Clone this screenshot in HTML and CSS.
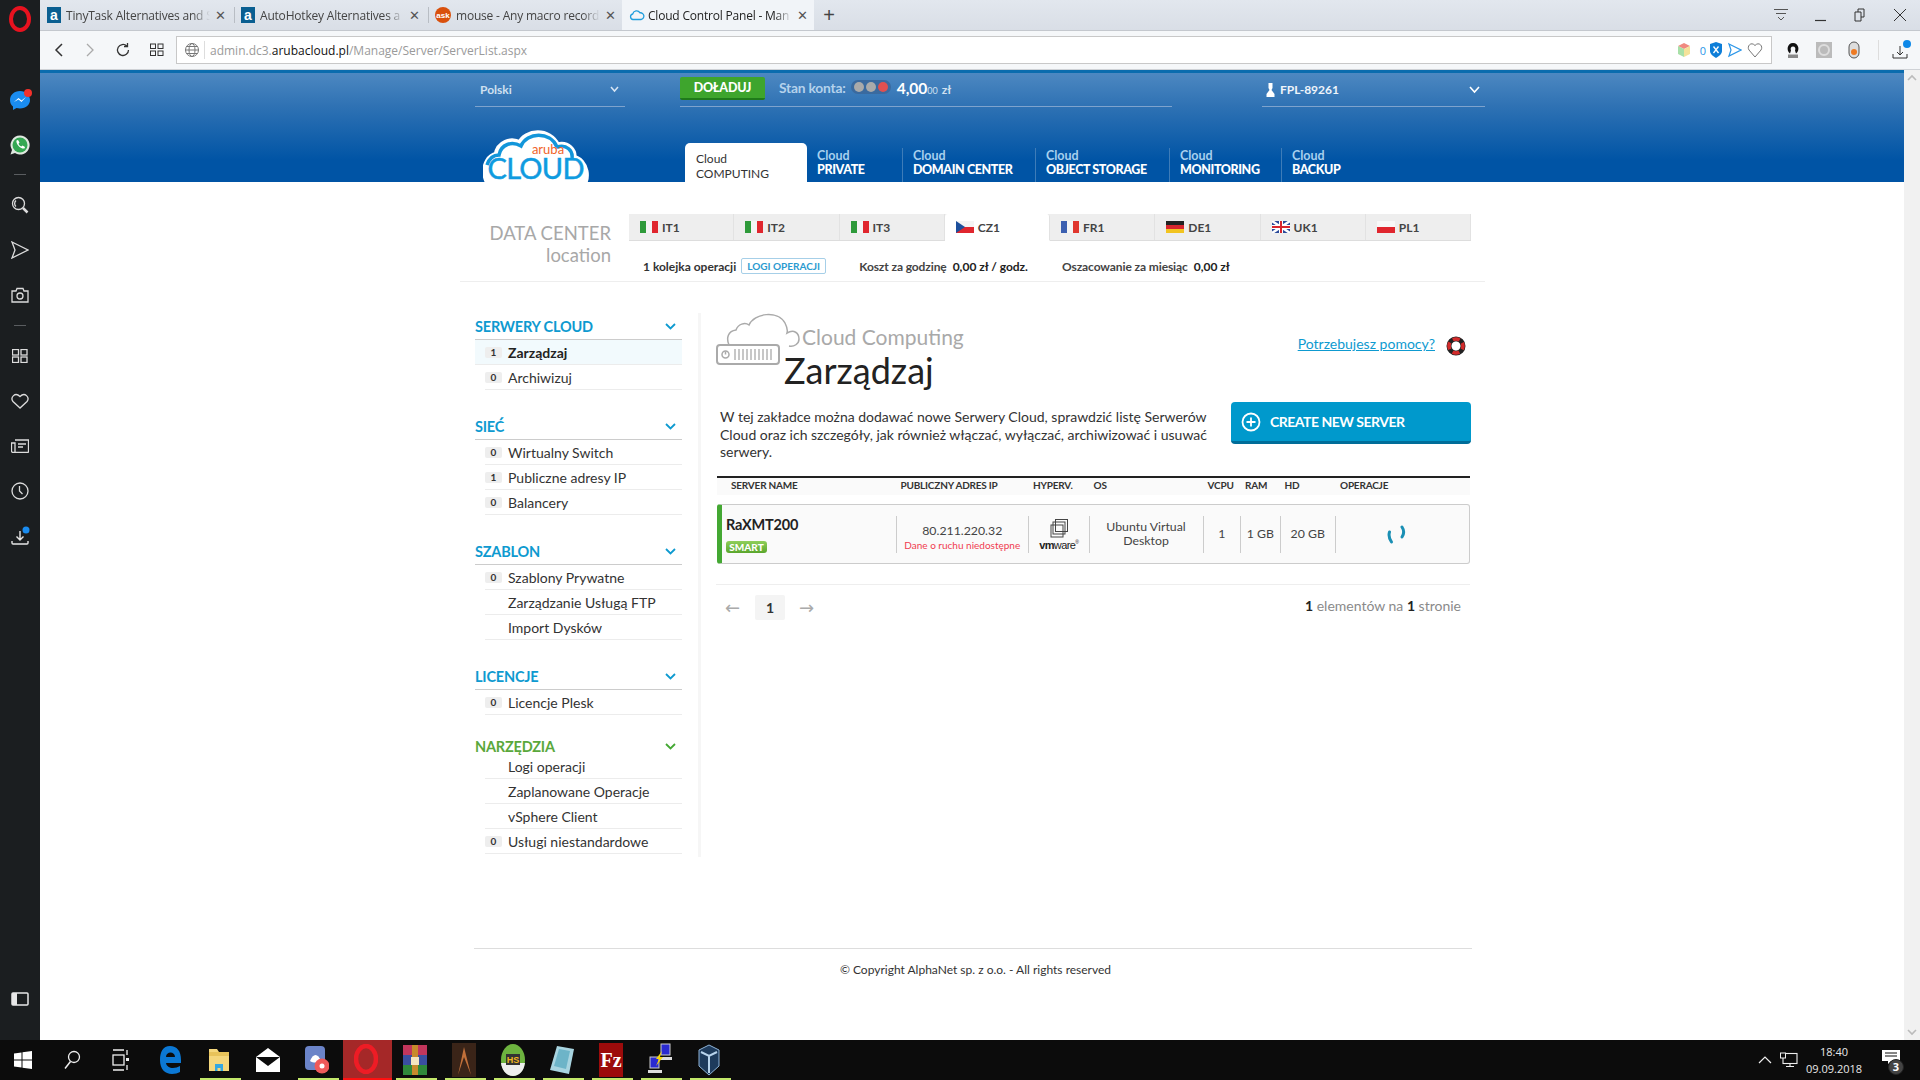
FILE: index.html
```html
<!DOCTYPE html>
<html lang="pl">
<head>
<meta charset="utf-8">
<title>Cloud Control Panel</title>
<link rel="stylesheet" href="styles.css">
</head>
<body>
<div class="app">
  <aside class="rail">
    <div class="rail-logo"><svg width="22" height="26" viewBox="0 0 22 26"><ellipse cx="11" cy="13" rx="9" ry="11" fill="none" stroke="#e8121f" stroke-width="4"/></svg></div>
    <div class="rail-item"><svg width="24" height="24" viewBox="0 0 24 24"><path d="M12 3C6 3 2 7 2 12c0 3 1 5 3 6.500V22l3.500-2c1 .3 2.300.5 3.500.5 6 0 10-4 10-8.500S18 3 12 3z" fill="#1a8cf0"/><path d="M6 14l4.500-4 3 2.500L18 9l-4.500 5-3-2.500z" fill="#fff"/><circle cx="20" cy="5" r="4" fill="#f4312b"/></svg></div>
    <div class="rail-item"><svg width="22" height="22" viewBox="0 0 22 22"><path d="M11 1.500a9.500 9.500 0 0 0-8 14.500L1.500 20.500 6 19a9.500 9.500 0 1 0 5-17.500z" fill="#dfe8df"/><circle cx="11" cy="11" r="7.500" fill="#34a853"/><path d="M7.500 6.500l1.500-.5 1.500 2.500-1 1.200c.6 1.300 1.500 2.200 2.800 2.800l1.200-1 2.500 1.500-.5 1.500c-3.500 1-9-4.500-8-8z" fill="#fff"/></svg></div>
    <div class="rail-div"></div>
    <div class="rail-item"><svg class="line" width="18" height="18" viewBox="0 0 18 18"><circle cx="7.500" cy="7.500" r="6"/><path d="M12 12l4.500 4.500" stroke-width="2.500"/><path d="M5 4.500a4 4 0 0 0 0 6"/></svg></div>
    <div class="rail-item"><svg class="line" width="18" height="18" viewBox="0 0 18 18"><path d="M1 1l16 8-16 8 3-8z"/></svg></div>
    <div class="rail-item"><svg class="line" width="18" height="18" viewBox="0 0 18 18"><path d="M1 5h4l1-2.500h6L13 5h4v11H1z"/><circle cx="9" cy="10" r="3"/></svg></div>
    <div class="rail-div"></div>
    <div class="rail-item"><svg class="line" width="16" height="14" viewBox="0 0 16 14"><rect x=".5" y=".5" width="6" height="5.500"/><rect x="9" y=".5" width="6" height="5.500"/><rect x=".5" y="8" width="6" height="5.500"/><rect x="9" y="8" width="6" height="5.500"/></svg></div>
    <div class="rail-item"><svg class="line" width="18" height="16" viewBox="0 0 18 16"><path d="M9 15L2 8.500C-1 4.500 4-1.500 9 3.500c5-5 10 1 7 5z"/></svg></div>
    <div class="rail-item"><svg class="line" width="18" height="14" viewBox="0 0 18 14"><path d="M4 1h13.500v11.500a1 1 0 0 1-1 1H2a1.500 1.500 0 0 1-1.500-1.500V4H4v9M7 5h8M7 8h5"/></svg></div>
    <div class="rail-item"><svg class="line" width="18" height="18" viewBox="0 0 18 18"><circle cx="9" cy="9" r="8"/><path d="M8.500 4v5l3 3"/></svg></div>
    <div class="rail-item"><svg width="20" height="20" viewBox="0 0 20 20"><path d="M10 5v9M6.500 10.500L10 14l3.500-3.500M2 15v2a1 1 0 0 0 1 1h14a1 1 0 0 0 1-1v-2" fill="none" stroke="#e6e6e6" stroke-width="1.400"/><circle cx="16" cy="4" r="3.500" fill="#1a8cf0"/></svg></div>
    <div class="rail-panel"><svg width="18" height="14" viewBox="0 0 18 14"><rect x="1" y="1" width="16" height="12" rx="1" fill="none" stroke="#e8e8e8" stroke-width="1.500"/><rect x="1" y="1" width="5" height="12" fill="#e8e8e8"/></svg></div>
  </aside>

  <div class="window">
    <div class="tabs">
      <div class="tab"><span class="fav fav-a">a</span><span class="tab-text">TinyTask Alternatives and S</span><span class="tab-x">✕</span></div>
      <div class="tab"><span class="fav fav-a">a</span><span class="tab-text">AutoHotkey Alternatives a</span><span class="tab-x">✕</span></div>
      <div class="tab"><span class="fav fav-ask">ask</span><span class="tab-text">mouse - Any macro record</span><span class="tab-x">✕</span></div>
      <div class="tab tab-active"><svg class="fav-svg" width="16" height="12" viewBox="0 0 16 12"><path d="M4 10.500a2.800 2.800 0 0 1-.3-5.500A4 4 0 0 1 11 3.800a3.300 3.300 0 0 1 1 6.700z" fill="none" stroke="#1f9ddc" stroke-width="1.300"/></svg><span class="tab-text">Cloud Control Panel - Man</span><span class="tab-x">✕</span></div>
      <div class="tab-plus">+</div>
      <div class="win-controls">
        <svg width="14" height="14" viewBox="0 0 14 14"><path d="M0 1.500h14M2 5.500h10M4 9l3 3 3-3" fill="none" stroke="#555" stroke-width="1"/></svg>
        <svg width="12" height="14" viewBox="0 0 12 14"><path d="M0 12.500h11" stroke="#333" stroke-width="1.200"/></svg>
        <svg width="12" height="14" viewBox="0 0 12 14"><path d="M1 4h6v9H1zM4 4V1h6v8H7" fill="none" stroke="#333"/></svg>
        <svg width="14" height="14" viewBox="0 0 14 14"><path d="M1 1l12 12M13 1L1 13" stroke="#333" stroke-width="1"/></svg>
      </div>
    </div>

    <div class="addr">
      <svg class="nav-ico" width="12" height="16" viewBox="0 0 12 16"><path d="M9 2L3 8l6 6" fill="none" stroke="#333" stroke-width="1.500"/></svg>
      <svg class="nav-ico" width="12" height="16" viewBox="0 0 12 16"><path d="M3 2l6 6-6 6" fill="none" stroke="#aaa" stroke-width="1.300"/></svg>
      <svg class="nav-ico" width="16" height="16" viewBox="0 0 16 16"><path d="M13.500 8a5.500 5.500 0 1 1-1.700-4M12.500 1v3.500H9" fill="none" stroke="#333" stroke-width="1.300"/></svg>
      <svg class="nav-ico" width="14" height="14" viewBox="0 0 14 14"><g fill="none" stroke="#333"><rect x=".5" y="1" width="5" height="4.500"/><rect x="8" y="1" width="5" height="4.500"/><rect x=".5" y="8" width="5" height="4.500"/><rect x="8" y="8" width="5" height="4.500"/></g></svg>
      <div class="urlbox">
        <svg width="16" height="16" viewBox="0 0 16 16"><g fill="none" stroke="#777"><circle cx="8" cy="8" r="6.500"/><ellipse cx="8" cy="8" rx="3" ry="6.500"/><path d="M1.500 8h13M2.500 4.500h11M2.500 11.500h11"/></g></svg>
        <span class="url-sep"></span>
        <span class="url"><span class="url-dim">admin.dc3.</span>arubacloud.pl<span class="url-dim">/Manage/Server/ServerList.aspx</span></span>
        <div class="url-icons">
          <svg width="14" height="16" viewBox="0 0 14 16"><path d="M7 1l6 3-6 3-6-3z" fill="#f08a80"/><path d="M1 4l6 3v8l-6-3z" fill="#a8e0a8"/><path d="M13 4L7 7v8l6-3z" fill="#f4e29a"/></svg>
          <span class="url-count">0</span>
          <svg width="14" height="16" viewBox="0 0 14 16"><path d="M7 0l6 2v7c0 3-3 5-6 7-3-2-6-4-6-7V2z" fill="#0e7ed8"/><path d="M4.500 4.500l5 6.500M9.500 4.500l-5 6.500" stroke="#fff" stroke-width="1.300"/></svg>
          <svg width="14" height="16" viewBox="0 0 14 16"><path d="M1 2l12 6-12 6 2-6z" fill="none" stroke="#2c96e8" stroke-width="1.200"/></svg>
          <svg width="16" height="16" viewBox="0 0 16 16"><path d="M8 15L2 8C-.5 4.500 4-1 8 3.500 12-1 16.500 4.500 14 8z" fill="none" stroke="#777"/></svg>
        </div>
      </div>
      <div class="ext">
        <svg width="16" height="18" viewBox="0 0 16 18"><path d="M5 12.500C1 10 2 2 8 2s7 8 3 10.500L10 9.500c1-2 0-4-2-4s-3 2-2 4z" fill="#111"/><rect x="3" y="13.500" width="10" height="3.500" fill="#888"/></svg>
        <svg width="16" height="18" viewBox="0 0 16 18"><rect x="0" y="1" width="16" height="16" fill="#bbb"/><circle cx="8" cy="9" r="5" fill="none" stroke="#ddd" stroke-width="2"/></svg>
        <svg width="14" height="18" viewBox="0 0 14 18"><rect x="2" y="1" width="10" height="16" rx="5" fill="#ddd" stroke="#555"/><circle cx="7" cy="11" r="3" fill="#ee7a22"/></svg>
        <span class="ext-sep"></span>
        <svg width="22" height="20" viewBox="0 0 22 20"><path d="M10 6v9M7 12l3 3 3-3M3 14v4h14v-4" fill="none" stroke="#333"/><circle cx="17" cy="4" r="4" fill="#0e88e8"/></svg>
      </div>
    </div>

    <div class="viewport">
      <div class="page">
        <header class="hdr">
          <div class="hdr-top">
            <div class="lang"><span>Polski</span><svg class="chev" width="9" height="7" viewBox="0 0 9 7"><path d="M1 1l3.500 4L8 1" fill="none" stroke="#d8e6f4" stroke-width="1.500"/></svg></div>
            <div class="acct">
              <span class="topup">DOŁADUJ</span>
              <span class="bal-label">Stan konta:</span>
              <span class="lights"><i></i><i></i><i class="on"></i></span>
              <span class="bal"><b>4,00</b><small>00</small> <em>zł</em></span>
            </div>
            <div class="user">
              <svg width="9" height="14" viewBox="0 0 9 14"><path d="M2.500 0h4v5l-1 2 3 4v3H.5v-3l3-4-1-2z" fill="#fff"/></svg>
              <span>FPL-89261</span>
              <svg class="chev" width="11" height="8" viewBox="0 0 11 8"><path d="M1 1l4.500 5L10 1" fill="none" stroke="#fff" stroke-width="1.600"/></svg>
            </div>
          </div>
          <div class="hdr-bottom">
            <svg class="logo" width="106" height="75" viewBox="0 0 106 75">
              <path d="M14 82C0 78-2 52 14 48c2-12 14-16 23-11 6-13 29-15 37 2 11-3 17 5 16 12 13 3 17 22 6 31z" fill="#fff" stroke="#fff" stroke-width="7"/>
              <path d="M4 58c2-6 6-10 12-10 2-11 13-14 22-9 6-14 29-15 36 1 10-3 16 4 15 11" fill="none" stroke="#1296da" stroke-width="3.500"/>
              <text class="logo-aruba" x="65" y="47" text-anchor="middle">aruba</text>
              <text class="logo-cloud" x="53" y="72" text-anchor="middle" textLength="97">CLOUD</text>
            </svg>
            <nav class="nav">
              <a class="nav-tab active">Cloud<br>COMPUTING</a>
              <a class="nav-tab w-private"><span>Cloud</span><b>PRIVATE</b></a>
              <a class="nav-tab sep w-domain"><span>Cloud</span><b>DOMAIN CENTER</b></a>
              <a class="nav-tab sep w-object"><span>Cloud</span><b>OBJECT STORAGE</b></a>
              <a class="nav-tab sep w-monitor"><span>Cloud</span><b>MONITORING</b></a>
              <a class="nav-tab sep"><span>Cloud</span><b>BACKUP</b></a>
            </nav>
          </div>
        </header>

        <section class="dc">
          <div class="dc-label"><div class="dc-title">DATA CENTER</div><div class="dc-sub">location</div></div>
          <div class="dc-main">
            <div class="dc-tabs">
              <div class="dc-tab"><svg class="flag" width="18" height="12" viewBox="0 0 18 12"><rect width="6" height="12" fill="#2e9a3a"/><rect x="6" width="6" height="12" fill="#f4f4f4"/><rect x="12" width="6" height="12" fill="#e0262e"/></svg>IT1</div>
              <div class="dc-tab"><svg class="flag" width="18" height="12" viewBox="0 0 18 12"><rect width="6" height="12" fill="#2e9a3a"/><rect x="6" width="6" height="12" fill="#f4f4f4"/><rect x="12" width="6" height="12" fill="#e0262e"/></svg>IT2</div>
              <div class="dc-tab"><svg class="flag" width="18" height="12" viewBox="0 0 18 12"><rect width="6" height="12" fill="#2e9a3a"/><rect x="6" width="6" height="12" fill="#f4f4f4"/><rect x="12" width="6" height="12" fill="#e0262e"/></svg>IT3</div>
              <div class="dc-tab on"><svg class="flag" width="18" height="12" viewBox="0 0 18 12"><rect width="18" height="6" fill="#f4f4f4"/><rect y="6" width="18" height="6" fill="#e0262e"/><path d="M0 0l9 6-9 6z" fill="#1d4f9c"/></svg>CZ1</div>
              <div class="dc-tab"><svg class="flag" width="18" height="12" viewBox="0 0 18 12"><rect width="6" height="12" fill="#3b5fb0"/><rect x="6" width="6" height="12" fill="#f4f4f4"/><rect x="12" width="6" height="12" fill="#e0362e"/></svg>FR1</div>
              <div class="dc-tab"><svg class="flag" width="18" height="12" viewBox="0 0 18 12"><rect width="18" height="4" fill="#222"/><rect y="4" width="18" height="4" fill="#d8262e"/><rect y="8" width="18" height="4" fill="#f2c420"/></svg>DE1</div>
              <div class="dc-tab"><svg class="flag" width="18" height="12" viewBox="0 0 18 12"><rect width="18" height="12" fill="#2a4a9a"/><path d="M0 0l18 12M18 0L0 12" stroke="#fff" stroke-width="2.500"/><path d="M9 0v12M0 6h18" stroke="#fff" stroke-width="4"/><path d="M9 0v12M0 6h18" stroke="#d8262e" stroke-width="2"/></svg>UK1</div>
              <div class="dc-tab"><svg class="flag" width="18" height="12" viewBox="0 0 18 12"><rect width="18" height="6" fill="#f8f8f8"/><rect y="6" width="18" height="6" fill="#e0262e"/></svg>PL1</div>
            </div>
            <div class="dc-info">
              <span class="q">1 kolejka operacji</span>
              <span class="logs">LOGI OPERACJI</span>
              <span class="cost">Koszt za godzinę</span><span class="val">0,00 zł / godz.</span>
              <span class="cost cost2">Oszacowanie za miesiąc</span><span class="val">0,00 zł</span>
            </div>
          </div>
        </section>

        <div class="body">
          <aside class="side">
            <div class="head">SERWERY CLOUD<svg class="hchev" width="11" height="7" viewBox="0 0 11 7"><path d="M1 1l4.500 4.500L10 1" fill="none" stroke="#0e9ad0" stroke-width="1.800"/></svg></div>
            <div class="row row-on"><span class="badge">1</span><b>Zarządzaj</b></div>
            <div class="row"><span class="badge">0</span>Archiwizuj</div>

            <div class="head">SIEĆ<svg class="hchev" width="11" height="7" viewBox="0 0 11 7"><path d="M1 1l4.500 4.500L10 1" fill="none" stroke="#0e9ad0" stroke-width="1.800"/></svg></div>
            <div class="row"><span class="badge">0</span>Wirtualny Switch</div>
            <div class="row"><span class="badge">1</span>Publiczne adresy IP</div>
            <div class="row"><span class="badge">0</span>Balancery</div>

            <div class="head">SZABLON<svg class="hchev" width="11" height="7" viewBox="0 0 11 7"><path d="M1 1l4.500 4.500L10 1" fill="none" stroke="#0e9ad0" stroke-width="1.800"/></svg></div>
            <div class="row"><span class="badge">0</span>Szablony Prywatne</div>
            <div class="row"><span class="badge none"></span>Zarządzanie Usługą FTP</div>
            <div class="row"><span class="badge none"></span>Import Dysków</div>

            <div class="head">LICENCJE<svg class="hchev" width="11" height="7" viewBox="0 0 11 7"><path d="M1 1l4.500 4.500L10 1" fill="none" stroke="#0e9ad0" stroke-width="1.800"/></svg></div>
            <div class="row"><span class="badge">0</span>Licencje Plesk</div>

            <div class="head head-tools">NARZĘDZIA<svg class="hchev" width="11" height="7" viewBox="0 0 11 7"><path d="M1 1l4.500 4.500L10 1" fill="none" stroke="#44a833" stroke-width="1.800"/></svg></div>
            <div class="row"><span class="badge none"></span>Logi operacji</div>
            <div class="row"><span class="badge none"></span>Zaplanowane Operacje</div>
            <div class="row"><span class="badge none"></span>vSphere Client</div>
            <div class="row"><span class="badge">0</span>Usługi niestandardowe</div>
          </aside>

          <main class="main">
            <div class="title">
              <svg class="title-ico" width="84" height="52" viewBox="0 0 84 52"><g fill="none" stroke="#aaa" stroke-width="1.500"><path d="M13 32C10 25 12 18 20 17C22 11 29 9 33 12C38 0 62-3 69 10C71 14 72 17 71 20C78 16 83 20 83 26C83 31 78 34 73 33"/><rect x="1" y="32" width="62" height="19" rx="3" fill="#fff" stroke-width="2"/><circle cx="9.500" cy="41.500" r="3.500"/><path d="M9.500 38.500v3"/><path d="M19 36v11M23 36v11M27 36v11M31 36v11M35 36v11M39 36v11M43 36v11M47 36v11M51 36v11M55 36v11" stroke-width="1.300"/></g></svg>
              <div class="title-text"><div class="t-sub">Cloud Computing</div><h1 class="t-main">Zarządzaj</h1></div>
              <a class="help">Potrzebujesz pomocy?</a>
              <svg class="buoy" width="20" height="20" viewBox="0 0 20 20"><circle cx="10" cy="10" r="7" fill="none" stroke="#222" stroke-width="5"/><circle cx="10" cy="10" r="7" fill="none" stroke="#d42b2b" stroke-width="3.600" stroke-dasharray="7 4" stroke-dashoffset="3.500"/><circle cx="10" cy="10" r="4.200" fill="#fff"/></svg>
            </div>

            <div class="intro">
              <p class="intro-text">W tej zakładce można dodawać nowe Serwery Cloud, sprawdzić listę Serwerów Cloud oraz ich szczegóły, jak również włączać, wyłączać, archiwizować i usuwać serwery.</p>
              <div class="create"><svg width="20" height="20" viewBox="0 0 20 20"><circle cx="10" cy="10" r="8.500" fill="none" stroke="#fff" stroke-width="1.800"/><path d="M10 5.500v9M5.500 10h9" stroke="#fff" stroke-width="1.800"/></svg>CREATE NEW SERVER</div>
            </div>

            <div class="thead">
              <span class="first">SERVER NAME</span><span>PUBLICZNY ADRES IP</span><span>HYPERV.</span><span>OS</span><span>VCPU</span><span>RAM</span><span>HD</span><span>OPERACJE</span>
            </div>
            <div class="srow">
              <div class="c-name"><div class="sname">RaXMT200</div><span class="smart">SMART</span></div>
              <div class="cell c-ip"><div>80.211.220.32</div><small>Dane o ruchu niedostępne</small></div>
              <div class="cell c-hv"><svg width="20" height="19" viewBox="0 0 20 19"><g fill="none" stroke="#444"><rect x="6.500" y=".5" width="12" height="12"/><rect x="4" y="3" width="12" height="12"/><rect x="2" y="6" width="12" height="12"/></g></svg><span class="vm"><b>vm</b>ware<sup>®</sup></span></div>
              <div class="cell">Ubuntu Virtual<br>Desktop</div>
              <div class="cell">1</div>
              <div class="cell">1 GB</div>
              <div class="cell">20 GB</div>
              <div class="cell c-ops"><svg width="20" height="20" viewBox="0 0 20 20"><g fill="none" stroke="#1a8fb4" stroke-width="3" stroke-linecap="round"><path d="M3.500 8C2.500 11 3.500 15 5.500 18"/><path d="M16 3C18 6 18 10 16 13"/></g></svg></div>
            </div>
            <div class="pager">
              <span class="arr">←</span><span class="pg">1</span><span class="arr">→</span>
              <span class="count"><b>1</b> elementów na <b>1</b> stronie</span>
            </div>
          </main>
        </div>

        <footer class="foot">© Copyright AlphaNet sp. z o.o. - All rights reserved</footer>
      </div>
      <div class="scroll">
        <svg width="10" height="8" viewBox="0 0 10 8"><path d="M1 6l4-4 4 4" fill="none" stroke="#bbb" stroke-width="1.600"/></svg>
        <svg width="10" height="8" viewBox="0 0 10 8"><path d="M1 2l4 4 4-4" fill="none" stroke="#bbb" stroke-width="1.600"/></svg>
      </div>
    </div>
  </div>
</div>

<div class="taskbar">
  <div class="tb"><svg width="18" height="18" viewBox="0 0 18 18"><path d="M0 2.500L7.500 1.500V8.500H0zM8.500 1.300L18 0V8.500H8.500zM0 9.500H7.500V16.500L0 15.500zM8.500 9.500H18V18L8.500 16.700z" fill="#fff"/></svg></div>
  <div class="tb"><svg width="18" height="20" viewBox="0 0 18 20"><circle cx="11" cy="7" r="5.500" fill="none" stroke="#eee" stroke-width="1.300"/><path d="M7.500 11.500L2 18.500" stroke="#eee" stroke-width="1.500"/></svg></div>
  <div class="tb"><svg width="18" height="22" viewBox="0 0 18 22"><g fill="none" stroke="#eee" stroke-width="1.300"><path d="M1 1h11M1 21h11"/><rect x="1" y="6" width="11" height="10"/><path d="M15 1v5M15 16v5"/></g><rect x="14" y="9" width="3" height="3" fill="#eee"/></svg></div>
  <div class="tb"><svg width="22" height="30" viewBox="0 0 22 30"><path d="M11 1C4 1 1 7 1 15c0 9 5 14 12 14 3 0 6-1 8-2v-6c-5 3-13 3-14-3h15v-3C22 6 18 1 11 1zM7 12c0-6 9-6 9 0z" fill="#0b78d4"/></svg></div>
  <div class="tb tb-on"><svg width="22" height="24" viewBox="0 0 22 24"><path d="M1 1h8l2 3h10v19H1z" fill="#f5d77c"/><rect x="1" y="4" width="20" height="4" fill="#e8c35a"/><path d="M7 23v-7h8v7h-2.500v-3h-3v3z" fill="#35a7e0"/></svg></div>
  <div class="tb"><svg width="24" height="26" viewBox="0 0 24 26"><path d="M0 10L12 1l12 9v15H0z" fill="#fff"/><path d="M0 10l24 0L12 19z" fill="#0c0c0c"/></svg></div>
  <div class="tb tb-on"><svg width="24" height="30" viewBox="0 0 24 30"><rect x="0" y="1" width="20" height="24" rx="4" fill="#6b84c8"/><path d="M5 16c3-8 8-8 11 0-3 2-8 2-11 0z" fill="#fff"/><circle cx="17" cy="21" r="7.500" fill="#ef5a5a"/><circle cx="17" cy="21" r="2.500" fill="#fff"/></svg></div>
  <div class="tb tb-opera"><svg width="24" height="30" viewBox="0 0 24 30"><ellipse cx="12" cy="15" rx="10" ry="13" fill="none" stroke="#ee1c25" stroke-width="4.500"/></svg></div>
  <div class="tb tb-on"><svg width="24" height="30" viewBox="0 0 24 30"><rect width="24" height="10" fill="#c2365c"/><rect y="10" width="24" height="10" fill="#3a4fa0"/><rect y="20" width="24" height="10" fill="#2f8a3a"/><rect x="9" width="6" height="30" fill="#c78a2c"/><rect x="8" y="12" width="8" height="8" fill="#f4e5c0"/></svg></div>
  <div class="tb tb-on"><svg width="24" height="34" viewBox="0 0 24 34"><rect width="24" height="34" fill="#3a2418"/><path d="M6 32L12 4l7 28-7-18z" fill="#c2703a"/></svg></div>
  <div class="tb tb-on"><svg width="24" height="32" viewBox="0 0 24 32"><ellipse cx="12" cy="16" rx="12" ry="16" fill="#6db33f"/><path d="M0 19h24c-1 8-6 13-12 13S1 27 0 19z" fill="#eee"/><rect x="5" y="10" width="14" height="11" fill="#333"/><text class="hs" x="12" y="19" text-anchor="middle">HS</text></svg></div>
  <div class="tb tb-on"><svg width="24" height="30" viewBox="0 0 24 30"><path d="M7 1l17 3-5 25L0 25z" fill="#a8d4e0"/><path d="M9 4l11 2-4 18-12-3z" fill="#6db4c8"/></svg></div>
  <div class="tb tb-on"><svg width="24" height="34" viewBox="0 0 24 34"><rect width="24" height="34" fill="#9c0b0b"/><text class="fz" x="12" y="24" text-anchor="middle">Fz</text></svg></div>
  <div class="tb tb-on"><svg width="24" height="34" viewBox="0 0 24 34"><rect x="13" y="1" width="9" height="11" fill="#2a2ad0" stroke="#ccc"/><rect x="2" y="14" width="9" height="11" fill="#2a2ad0" stroke="#ccc"/><rect x="0" y="27" width="14" height="3" fill="#ddd"/><rect x="12" y="14" width="12" height="3" fill="#ddd"/><path d="M14 8l-6 8 3 0-3 7 7-9-3 0z" fill="#f6d60a"/></svg></div>
  <div class="tb tb-on"><svg width="22" height="32" viewBox="0 0 22 32"><path d="M11 1l10 5v16l-10 9-10-9V6z" fill="#1e3b5c" stroke="#8fb4d8"/><path d="M3 8l8 4 8-4M11 12v17" fill="none" stroke="#b8d4ec" stroke-width="2"/></svg></div>
  <div class="tray">
    <svg width="14" height="8" viewBox="0 0 14 8"><path d="M1 7l6-6 6 6" fill="none" stroke="#eee" stroke-width="1.200"/></svg>
    <svg class="tray-net" width="18" height="16" viewBox="0 0 18 16"><g fill="none" stroke="#eee" stroke-width="1.100"><rect x="3" y="1.500" width="14" height="10"/><path d="M10 11.500v3M6 14.500h8"/></g><rect x=".5" y="1" width="5" height="5" fill="#0c0c0c" stroke="#eee"/></svg>
    <div class="clock"><div>18:40</div><div>09.09.2018</div></div>
    <div class="notif"><svg width="18" height="14" viewBox="0 0 18 14"><path d="M0 0h18v11h-9l-3 3v-3H0z" fill="#fff"/><path d="M3 3h12M3 6h12" stroke="#0c0c0c"/></svg><span class="notif-n">3</span></div>
  </div>
</div>
</body>
</html>
```

FILE: styles.css
```css
* { box-sizing: border-box; }
html, body { margin: 0; padding: 0; }
body { width: 1920px; height: 1080px; overflow: hidden; font-family: Lato, "Noto Sans", sans-serif; color: #333; background: #fff; }
svg { display: block; flex: none; }

.app { display: flex; height: 1040px; }

/* browser side rail */
.rail { width: 40px; background: #1b1e20; display: flex; flex-direction: column; align-items: center; }
.rail-logo { height: 77px; padding-top: 6px; }
.rail-item { height: 45px; width: 100%; display: flex; align-items: center; justify-content: center; }
.rail-div { height: 15.500px; width: 100%; display: flex; align-items: center; justify-content: center; }
.rail-div::before { content: ""; width: 12px; height: 1px; background: #5a5d60; }
.rail-panel { margin-top: auto; padding-bottom: 34px; }
.line { fill: none; stroke: #dcdcdc; stroke-width: 1.300; }

.window { flex: 1; min-width: 0; display: flex; flex-direction: column; }

/* tab strip */
.tabs { height: 31px; display: flex; align-items: stretch; background: linear-gradient(#e2e7ee, #d9dee6); border-bottom: 1px solid #c4c8ce; font-family: "Open Sans", sans-serif; font-size: 12px; color: #444; }
.tab { width: 194px; display: flex; align-items: center; padding-left: 7px; position: relative; }
.tab + .tab::before { content: ""; position: absolute; left: 0; top: 7px; bottom: 7px; width: 1px; background: #b8bdc4; }
.tab-active { background: #f1f4f8; color: #222; width: 192px; padding-left: 7px; }
.tab-active::before { display: none; }
.fav { width: 14px; height: 16px; flex: none; display: flex; align-items: center; justify-content: center; color: #fff; }
.fav-a { background: #0a5f91; font: 700 14px "Liberation Sans", sans-serif; }
.fav-ask { width: 16px; border-radius: 50%; background: #d9500c; font: 700 8px "Liberation Sans", sans-serif; }
.fav-svg { margin-right: -2px; }
.tab-text { margin-left: 5px; width: 144px; white-space: nowrap; overflow: hidden; letter-spacing: -.2px; -webkit-mask-image: linear-gradient(90deg, #000 88%, transparent); mask-image: linear-gradient(90deg, #000 88%, transparent); }
.tab-x { font: 13px "DejaVu Sans", sans-serif; color: #555; margin-left: 5px; }
.tab-plus { width: 30px; display: flex; align-items: center; justify-content: center; font: 300 20px "Liberation Sans", sans-serif; color: #444; }
.win-controls { margin-left: auto; display: flex; align-items: center; gap: 27px; padding-right: 13px; }

/* address bar */
.addr { height: 39px; display: flex; align-items: center; background: #f5f7f9; border-bottom: 1px solid #cfd2d6; padding-left: 13px; }
.nav-ico { margin-right: 19px; }
.urlbox { width: 1596px; height: 28px; margin-left: -7px; background: #fff; border: 1px solid #c8c8c8; display: flex; align-items: center; padding-left: 7px; font-family: "Open Sans", sans-serif; font-size: 12px; color: #111; }
.url-sep { width: 1px; height: 18px; background: #ddd; margin: 0 5px 0 4px; }
.url-dim { color: #9a9a9a; }
.url-icons { margin-left: auto; display: flex; align-items: center; gap: 5px; padding-right: 8px; }
.url-count { color: #2c96e8; font-size: 11px; margin-left: 4px; margin-right: -2px; }
.ext { display: flex; align-items: center; gap: 15px; padding-left: 13px; }
.ext-sep { width: 1px; height: 20px; background: #ddd; margin-left: 2px; margin-right: -4px; }

/* page */
.viewport { flex: 1; display: flex; min-height: 0; }
.page { flex: 1; min-width: 0; overflow: hidden; }
.scroll { width: 16px; background: #f1f1f1; display: flex; flex-direction: column; justify-content: space-between; align-items: center; padding: 4px 0; }

.hdr { height: 112px; border-top: 3px solid #0a6cae; background: linear-gradient(#4d88c1 0, #2f72b4 30%, #0054a5 80%, #0054a5 100%); padding-left: 435px; color: #fff; }
.hdr-top { display: flex; height: 34px; }
.lang { width: 150px; border-bottom: 1px solid #7ea3cd; display: flex; align-items: center; padding-left: 5px; font-size: 12px; font-weight: 700; color: #cfe0f0; }
.lang .chev { margin-left: auto; margin-right: 6px; }
.acct { width: 492px; margin-left: 55px; border-bottom: 1px solid #7ea3cd; display: flex; align-items: flex-start; padding-top: 4px; }
.topup { width: 85px; height: 23px; background: #3ea52d; border-bottom: 2px solid #1f7a1a; border-radius: 2px; font-size: 12.500px; font-weight: 900; text-align: center; line-height: 22px; letter-spacing: -.2px; }
.bal-label { margin-left: 14px; font-size: 13.800px; font-weight: 700; color: #b4d2ec; line-height: 22px; letter-spacing: -.2px; }
.lights { margin-left: 5px; margin-top: 3px; display: flex; gap: 2px; padding: 2px 3px; background: #3a6a9f; border-radius: 8px; height: 14px; }
.lights i { width: 10px; height: 10px; border-radius: 50%; background: #aaa; }
.lights i.on { background: #e05050; }
.bal { margin-left: 6px; line-height: 21px; white-space: nowrap; }
.bal b { font-size: 15.500px; font-weight: 700; }
.bal small { font-size: 9px; color: #cfe0f0; }
.bal em { font-style: normal; font-size: 12px; font-weight: 700; color: #cfe0f0; }
.user { width: 223px; margin-left: 90px; border-bottom: 1px solid #7ea3cd; display: flex; align-items: center; padding-left: 4px; font-size: 12px; font-weight: 700; color: #eef4fa; }
.user span { margin-left: 5px; }
.user .chev { margin-left: auto; margin-right: 5px; }
.hdr-bottom { display: flex; height: 75px; overflow: hidden; }
.logo { margin-left: 8px; }
.logo-aruba { font: 400 13px Lato, sans-serif; fill: #f0642a; }
.logo-cloud { font: 400 29px Lato, sans-serif; fill: #0f9be0; stroke: #0f9be0; stroke-width: .5px; }
.nav { display: flex; margin-left: 96px; height: 39px; margin-top: 36px; }
.nav-tab { font-size: 12.500px; line-height: 14px; color: #fff; padding: 5px 10px 0; display: flex; flex-direction: column; width: 112px; white-space: nowrap; }
.nav-tab span { color: #a8d0ee; font-weight: 700; font-size: 12.500px; }
.nav-tab b { font-weight: 900; font-size: 12.500px; letter-spacing: -.4px; }
.nav-tab.sep { border-left: 1px solid #3e7cb8; margin-top: 5px; padding-top: 1px; height: 34px; padding-left: 10px; }
.nav-tab.active { display: block; width: 122px; background: #fff; color: #333; border-radius: 5px 5px 0 0; padding: 9px 11px 0; font-size: 12px; line-height: 14.500px; }
.nav-tab.w-private { width: 95px; margin-top: 5px; padding-top: 1px; }
.nav-tab.w-domain { width: 133px; }
.nav-tab.w-object { width: 134px; }
.nav-tab.w-monitor { width: 112px; }

/* data center strip */
.dc { margin-left: 420px; width: 1025px; height: 67px; margin-top: 32px; display: flex; border-bottom: 1px solid #eee; box-sizing: content-box; }
.dc-label { width: 151px; text-align: right; padding-top: 8px; color: #a8a8a8; }
.dc-title { font-size: 18.500px; line-height: 22px; }
.dc-sub { font-size: 18.500px; line-height: 23px; }
.dc-main { margin-left: 18px; width: 842px; }
.dc-tabs { display: flex; height: 27px; background: #eee; border-bottom: 1px solid #ddd; }
.dc-tab { width: 105.250px; display: flex; align-items: center; padding-left: 11px; border-right: 1px solid #e2e2e2; font-size: 12px; font-weight: 700; color: #444; }
.dc-tab .flag { margin-right: 4px; }
.dc-tab.on { background: #fff; border-bottom: 1px solid #fff; height: 27px; border-radius: 3px 3px 0 0; }
.dc-info { display: flex; align-items: center; margin-top: 17px; padding-left: 14px; font-size: 12px; color: #333; white-space: nowrap; }
.q { font-weight: 700; }
.logs { margin-left: 5px; width: 85px; height: 16px; border: 1px solid #a6cfe8; border-radius: 2px; font-size: 10px; font-weight: 700; color: #2a9ad0; text-align: center; line-height: 14px; }
.cost { margin-left: 33px; color: #444; font-weight: 700; letter-spacing: -.1px; }
.cost2 { margin-left: 34px; }
.val { margin-left: 6px; font-weight: 700; color: #222; }

/* body */
.body { display: flex; margin-left: 435px; margin-top: 31px; }
.side { width: 226px; padding-right: 16px; border-right: 3px solid #f6f6f6; height: 544px; flex: none; }
.head { height: 27px; margin-top: 23px; border-bottom: 1px solid #ccc; display: flex; align-items: center; justify-content: space-between; padding-right: 6px; font-size: 14.500px; font-weight: 700; letter-spacing: -.2px; color: #0e9ad0; }
.head:first-child { margin-top: 0; }
.head-tools { height: 15px; margin-top: 24px; border-bottom: 0; color: #5aa83c; }
.row { height: 25px; margin-left: 10px; border-bottom: 1px solid #ececec; display: flex; align-items: center; font-size: 14px; color: #333; }
.row-on { margin-left: 0; padding-left: 10px; background: #f2fafd; }
.row-on b { font-weight: 700; color: #222; }
.badge { width: 17px; height: 11px; margin-right: 6px; flex: none; background: #eee; border-radius: 2px; font-size: 10px; line-height: 11px; font-weight: 700; text-align: center; color: #333; }
.badge.none { background: none; }

.main { width: 755px; margin-left: 15px; flex: none; }
.title { height: 89px; display: flex; position: relative; }
.title-text { margin-left: 2px; padding-top: 10px; }
.t-sub { font-size: 21px; line-height: 28px; color: #a9a9a9; }
.t-main { margin: 1px 0 0 -18px; font-size: 36px; font-weight: 400; line-height: 36px; color: #222; }
.help { margin-left: auto; margin-top: 22px; font-size: 14px; line-height: 18px; height: 18px; color: #0e9ad0; text-decoration: underline; }
.buoy { margin: 23px 5px 0 11px; }

.intro { display: flex; height: 74px; }
.intro-text { margin: 6px 0 0 4px; width: 498px; font-size: 14px; line-height: 17.500px; color: #333; }
.create { margin-left: auto; width: 240px; height: 42px; background: #0099cc; border-bottom: 3px solid #006d99; border-radius: 4px; display: flex; align-items: center; padding-left: 10px; gap: 9px; color: #fff; font-size: 14px; font-weight: 700; letter-spacing: -.5px; }

.thead, .srow { display: grid; grid-template-columns: 178.500px 132.500px 60.500px 114px 37.500px 39.500px 55.500px 1fr; margin-left: 1px; width: 753px; }
.thead { height: 19px; padding-bottom: 3px; border-top: 2px solid #222; background: #fafafa; align-items: center; font-size: 10px; font-weight: 700; color: #333; white-space: nowrap; letter-spacing: -.2px; }
.thead span { padding-left: 5px; }
.thead .first { padding-left: 14px; }
.srow { grid-template-columns: 173.500px 132.500px 60.500px 114px 37.500px 39.500px 55.500px 1fr; margin-top: 9px; height: 60px; border: 1px solid #ccc; border-left: 5px solid #44a833; border-radius: 3px; background: #fafafa; align-items: center; }
.c-name { padding: 2px 0 0 4px; }
.sname { font-size: 14.500px; font-weight: 700; line-height: 18px; color: #222; letter-spacing: -.2px; }
.smart { display: inline-block; margin-top: 7px; width: 41px; height: 12px; border-radius: 3px; background: linear-gradient(#8fcf5a, #5aa62c); color: #fff; font-size: 10px; line-height: 12px; font-weight: 900; text-align: center; }
.cell { height: 37px; border-left: 1px solid #ccc; display: flex; flex-direction: column; align-items: center; justify-content: center; text-align: center; font-size: 12.300px; line-height: 14px; color: #444; }
.c-ip small { font-size: 10px; line-height: 12px; color: #f03c50; white-space: nowrap; }
.c-ip div { line-height: 16px; padding-top: 5px; }
.c-ops svg { margin-right: 14px; }
.vm { font: 400 11px "Liberation Sans", sans-serif; letter-spacing: -.6px; color: #222; line-height: 9px; }
.vm sup { font-size: 5px; }

.pager { margin-left: 0; margin-top: 20px; border-top: 1px solid #eee; padding: 10px 9px 0 9px; display: flex; align-items: center; width: 754px; color: #aaa; }
.arr { font: 18px "DejaVu Sans", sans-serif; color: #aaa; width: 16px; }
.pg { width: 30px; height: 25px; margin: 0 14px; background: #f4f4f4; border-radius: 2px; text-align: center; line-height: 25px; font-size: 14px; font-weight: 700; color: #333; }
.count { margin-left: auto; font-size: 14px; color: #8a8a8a; margin-top: -4px; }
.count b { color: #222; font-weight: 700; }

.foot { margin: 91px 0 0 434px; width: 998px; border-top: 1px solid #ddd; padding: 13px 0 0 5px; text-align: center; font-size: 12px; line-height: 15px; color: #333; }

/* taskbar */
.taskbar { height: 40px; background: #0c0c0c; display: flex; }
.tb { width: 49px; height: 40px; display: flex; align-items: center; justify-content: center; position: relative; }
.tb > svg { margin-left: -3px; }
.tb-on::after { content: ""; position: absolute; left: 4px; right: 4px; bottom: 0; height: 2px; background: #c3e86a; }
.tb-opera { background: #a52828; border-bottom: 2px solid #ff1010; }
.hs { font: 700 9px "Liberation Sans", sans-serif; fill: #f3b61f; }
.fz { font: 700 20px "Liberation Serif", serif; fill: #fff; }
.tray { margin-left: auto; display: flex; align-items: center; color: #e8e8e8; font: 12px "Open Sans", sans-serif; padding-right: 14px; }
.tray-net { margin-left: 8px; }
.clock { margin-left: 3px; width: 66px; text-align: center; line-height: 17px; font-size: 11px; }
.notif { margin-left: 15px; position: relative; width: 24px; height: 30px; padding-top: 5px; }
.notif-n { position: absolute; left: 6px; top: 14px; width: 16px; height: 16px; border-radius: 50%; background: #444; border: 1px solid #222; text-align: center; line-height: 14px; font-size: 11px; font-weight: 700; color: #fff; }
```
